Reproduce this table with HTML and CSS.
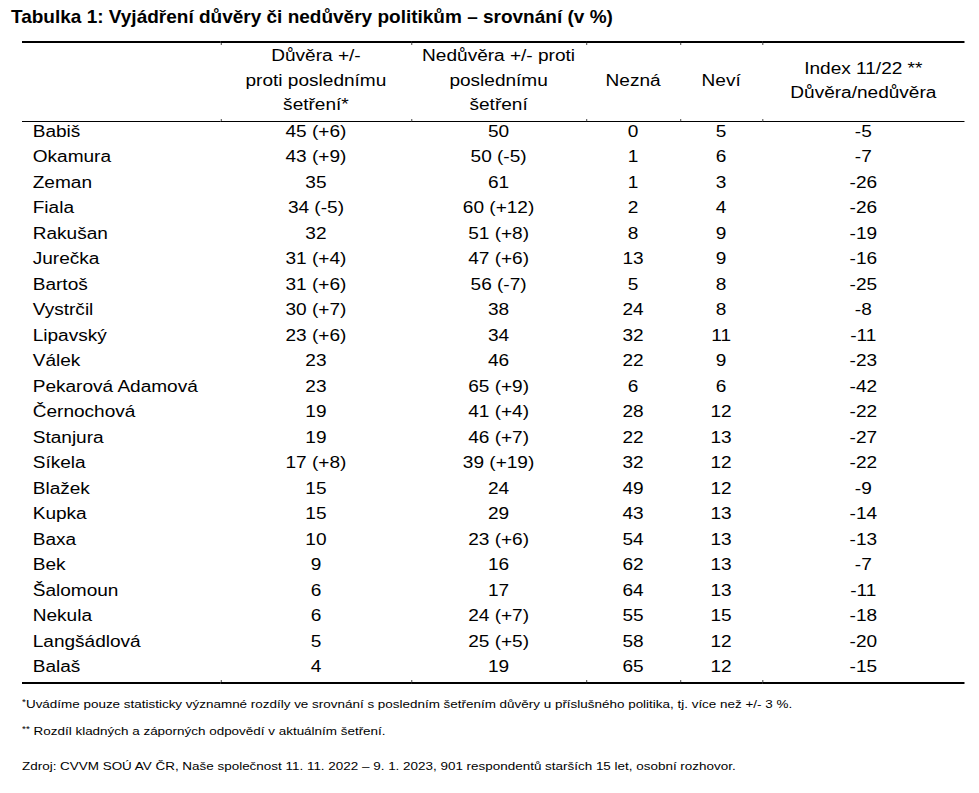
FILE: index.html
```html
<!DOCTYPE html>
<html lang="cs">
<head>
<meta charset="utf-8">
<title>Tabulka 1</title>
<link rel="stylesheet" href="styles.css">
</head>
<body>
<h1 class="title">Tabulka 1: Vyjádření důvěry či nedůvěry politikům – srovnání (v %)</h1>
<div class="figure">
  <table class="data">
    <colgroup>
      <col class="c-name"><col class="c-trust"><col class="c-distrust"><col class="c-unknown"><col class="c-dontknow"><col class="c-index">
    </colgroup>
    <thead>
      <tr>
        <th></th>
        <th>Důvěra +/-<br>proti poslednímu<br>šetření*</th>
        <th>Nedůvěra +/- proti<br>poslednímu<br>šetření</th>
        <th>Nezná</th>
        <th>Neví</th>
        <th>Index 11/22 **<br>Důvěra/nedůvěra</th>
      </tr>
    </thead>
    <tbody>
      <tr><td class="name">Babiš</td><td>45 (+6)</td><td>50</td><td>0</td><td>5</td><td>-5</td></tr>
      <tr><td class="name">Okamura</td><td>43 (+9)</td><td>50 (-5)</td><td>1</td><td>6</td><td>-7</td></tr>
      <tr><td class="name">Zeman</td><td>35</td><td>61</td><td>1</td><td>3</td><td>-26</td></tr>
      <tr><td class="name">Fiala</td><td>34 (-5)</td><td>60 (+12)</td><td>2</td><td>4</td><td>-26</td></tr>
      <tr><td class="name">Rakušan</td><td>32</td><td>51 (+8)</td><td>8</td><td>9</td><td>-19</td></tr>
      <tr><td class="name">Jurečka</td><td>31 (+4)</td><td>47 (+6)</td><td>13</td><td>9</td><td>-16</td></tr>
      <tr><td class="name">Bartoš</td><td>31 (+6)</td><td>56 (-7)</td><td>5</td><td>8</td><td>-25</td></tr>
      <tr><td class="name">Vystrčil</td><td>30 (+7)</td><td>38</td><td>24</td><td>8</td><td>-8</td></tr>
      <tr><td class="name">Lipavský</td><td>23 (+6)</td><td>34</td><td>32</td><td>11</td><td>-11</td></tr>
      <tr><td class="name">Válek</td><td>23</td><td>46</td><td>22</td><td>9</td><td>-23</td></tr>
      <tr><td class="name">Pekarová Adamová</td><td>23</td><td>65 (+9)</td><td>6</td><td>6</td><td>-42</td></tr>
      <tr><td class="name">Černochová</td><td>19</td><td>41 (+4)</td><td>28</td><td>12</td><td>-22</td></tr>
      <tr><td class="name">Stanjura</td><td>19</td><td>46 (+7)</td><td>22</td><td>13</td><td>-27</td></tr>
      <tr><td class="name">Síkela</td><td>17 (+8)</td><td>39 (+19)</td><td>32</td><td>12</td><td>-22</td></tr>
      <tr><td class="name">Blažek</td><td>15</td><td>24</td><td>49</td><td>12</td><td>-9</td></tr>
      <tr><td class="name">Kupka</td><td>15</td><td>29</td><td>43</td><td>13</td><td>-14</td></tr>
      <tr><td class="name">Baxa</td><td>10</td><td>23 (+6)</td><td>54</td><td>13</td><td>-13</td></tr>
      <tr><td class="name">Bek</td><td>9</td><td>16</td><td>62</td><td>13</td><td>-7</td></tr>
      <tr><td class="name">Šalomoun</td><td>6</td><td>17</td><td>64</td><td>13</td><td>-11</td></tr>
      <tr><td class="name">Nekula</td><td>6</td><td>24 (+7)</td><td>55</td><td>15</td><td>-18</td></tr>
      <tr><td class="name">Langšádlová</td><td>5</td><td>25 (+5)</td><td>58</td><td>12</td><td>-20</td></tr>
      <tr><td class="name">Balaš</td><td>4</td><td>19</td><td>65</td><td>12</td><td>-15</td></tr>
    </tbody>
  </table>
  <div class="notes">
    <p class="note"><span class="mark">*</span>Uvádíme pouze statisticky významné rozdíly ve srovnání s posledním šetřením důvěry u příslušného politika, tj. více než +/- 3 %.</p>
    <p class="note"><span class="mark">**</span> Rozdíl kladných a záporných odpovědí v aktuálním šetření.</p>
    <p class="note source">Zdroj: CVVM SOÚ AV ČR, Naše společnost 11. 11. 2022 – 9. 1. 2023, 901 respondentů starších 15 let, osobní rozhovor.</p>
  </div>
</div>
</body>
</html>
```
FILE: styles.css
```css
html, body {
  margin: 0;
  padding: 0;
  background: #ffffff;
  color: #000000;
  font-family: "Liberation Sans", Arial, sans-serif;
}

.title {
  margin: 6px 0 0 11px;
  font-size: 19px;
  line-height: 22px;
  font-weight: bold;
}

/* the table is a horizontally stretched picture in the original */
.figure {
  width: 792px;
  margin: 13px 0 0 22px;
  transform: scaleX(1.19);
  transform-origin: 0 0;
}

.data {
  width: 792px;
  table-layout: fixed;
  border-collapse: collapse;
  border-top: 2px solid #000;
  border-bottom: 2px solid #000;
  font-size: 16px;
}

.c-name { width: 167px; }
.c-trust { width: 160px; }
.c-distrust { width: 147px; }
.c-unknown { width: 79px; }
.c-dontknow { width: 69px; }
.c-index { width: 170px; }

.data thead th {
  height: 76px;
  padding: 0 0 2px;
  border-bottom: 1px solid #000;
  font-weight: normal;
  line-height: 24.5px;
  text-align: center;
  vertical-align: middle;
}

/* small cell-edge ticks on the rules, as in the original */
.data thead th + th {
  background:
    linear-gradient(#666, #666) left top / 1px 2px no-repeat,
    linear-gradient(#666, #666) left bottom / 1px 2px no-repeat;
}

.data tbody tr:last-child td + td {
  background: linear-gradient(#666, #666) left bottom / 1px 2px no-repeat;
}

.data tbody tr {
  height: 25.5px;
}

.data tbody td {
  padding: 0 0 5px;
  line-height: 20px;
  text-align: center;
  vertical-align: middle;
  white-space: nowrap;
}

.data tbody td.name {
  padding-left: 9px;
  text-align: left;
}

.notes {
  padding-top: 13px;
  font-size: 11.3px;
}

.note {
  margin: 0 0 13px;
  line-height: 14px;
  white-space: nowrap;
}

.note.source {
  margin-top: 21px;
}

.mark {
  font-size: 0.75em;
  line-height: 0;
  vertical-align: 3px;
}
```
